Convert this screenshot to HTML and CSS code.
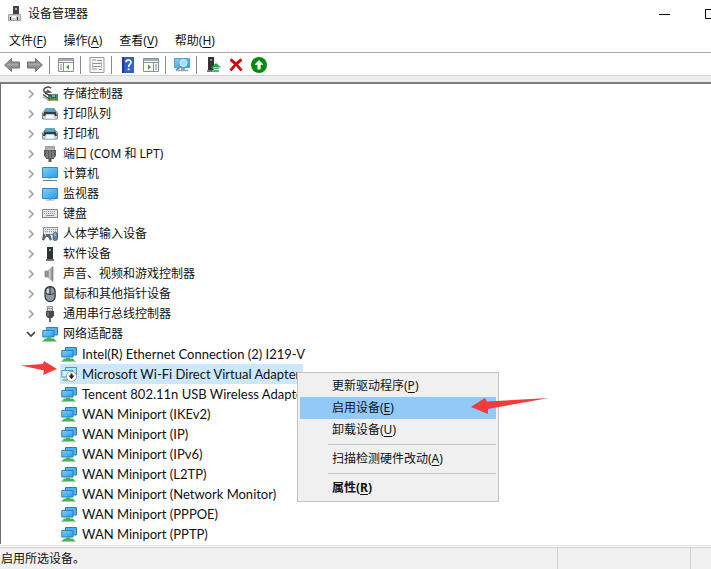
FILE: index.html
```html
<!DOCTYPE html>
<html lang="zh-CN">
<head>
<meta charset="utf-8">
<title>设备管理器</title>
<link rel="stylesheet" href="styles.css">
</head>
<body>
<svg class="sprites" aria-hidden="true">
  <defs>
    <linearGradient id="screen" x1="0" y1="0" x2="1" y2="1">
      <stop offset="0" stop-color="#7fd0fc"/><stop offset="1" stop-color="#2a9be8"/>
    </linearGradient>
    <linearGradient id="steel" x1="0" y1="0" x2="1" y2="0">
      <stop offset="0" stop-color="#777"/><stop offset=".5" stop-color="#ddd"/><stop offset="1" stop-color="#777"/>
    </linearGradient>
  </defs>
  <symbol id="i-chevron" viewBox="0 0 10 10"><path d="M3 1l4 4-4 4" fill="none" stroke="#a2a2a2" stroke-width="1.6"/></symbol>
  <symbol id="i-chevron-open" viewBox="0 0 10 10"><path d="M1 3l4 4 4-4" fill="none" stroke="#404040" stroke-width="1.7"/></symbol>
  <symbol id="i-app" viewBox="0 0 16 16">
    <path d="M6 0h6v9H6z" fill="#444"/><path d="M8 2h2v2H8z" fill="#aaa"/>
    <path d="M1.500 8.500h12v6h-12z" fill="#d0d0d0" stroke="#a0a0a0"/><path d="M3 11h1v3H3zM10 11h1v3h-1z" fill="#222"/><path d="M5 10h4v2H5z" fill="#fff"/>
  </symbol>
  <symbol id="i-back" viewBox="0 0 16 16"><path d="M.7 8L7.500 1.500v3.500h8v6h-8v3.500z" fill="#8f8f8f" stroke="#707070"/><path d="M3 7.500h11" stroke="#a9a9a9" stroke-width="2"/></symbol>
  <symbol id="i-forward" viewBox="0 0 16 16"><path d="M15.300 8L8.500 1.500v3.500h-8v6h8v3.500z" fill="#8f8f8f" stroke="#707070"/><path d="M2 7.500h11" stroke="#a9a9a9" stroke-width="2"/></symbol>
  <symbol id="i-tree-pane" viewBox="0 0 16 16">
    <path d="M.5 1.500h15v13H.5z" fill="#fbfbf8" stroke="#8b8f96"/><path d="M1 2h14v2H1z" fill="#a4adb7"/><path d="M1 5.500h14" stroke="#8b8f96"/>
    <path d="M5.500 6v8" stroke="#8b8f96"/><path d="M2 8h2M2 10h2M2 12h2" stroke="#7289a5"/><path d="M11 7.500v5L8 10z" fill="#3ea13c"/>
  </symbol>
  <symbol id="i-action-pane" viewBox="0 0 16 16">
    <path d="M.5 1.500h15v13H.5z" fill="#fbfbf8" stroke="#8b8f96"/><path d="M1 2h14v2H1z" fill="#a4adb7"/><path d="M1 5.500h14" stroke="#8b8f96"/>
    <path d="M10.500 6v8" stroke="#8b8f96"/><path d="M12 8h2M12 10h2M12 12h2" stroke="#7289a5"/><path d="M5 7.500v5L8 10z" fill="#3ea13c"/>
  </symbol>
  <symbol id="i-properties" viewBox="0 0 16 16">
    <path d="M1 .5h14v15H1z" fill="#f7f7f7" stroke="#9a9a9a"/>
    <path d="M3 3h4M8 3.500h5M4 6.500h8M4 9.500h8M3 12h5M10 12.500h3" stroke="#8f9499"/><path d="M3.500 5v6M12.500 5v6" stroke="#b9bdc2"/>
  </symbol>
  <symbol id="i-help" viewBox="0 0 16 16">
    <path d="M2 0h12v16H2z" fill="#3460c4"/><path d="M2 0h2v16H2z" fill="#1c3b8d"/>
    <path d="M6 5.300C6 2.300 11 2.300 11 5.200 11 7.200 8.600 7.300 8.600 10" fill="none" stroke="#fff" stroke-width="1.700"/><path d="M7.700 11.300h1.900v1.900H7.700z" fill="#fff"/>
  </symbol>
  <symbol id="i-scan" viewBox="0 0 16 16">
    <path d="M.5 1.500h15v9H.5z" fill="url(#screen)" stroke="#5b9cc4"/><path d="M7 11h4v2H7z" fill="#8aa"/><path d="M4 13.500h10" stroke="#8fa9ba" stroke-width="1.500"/>
    <path d="M7.500 8.500l-5.500 5" stroke="#6b93ad" stroke-width="2"/><circle cx="9.500" cy="6" r="3.500" fill="#a5defd" stroke="#d5f0ff"/>
  </symbol>
  <symbol id="i-enable" viewBox="0 0 16 16">
    <path d="M3 0h6v14H3z" fill="#343434"/><path d="M5 2h2v2H5z" fill="#5fae72"/><path d="M2 13h7v2H2z" fill="#777"/>
    <path d="M11 6l5 4.500H6z" fill="#2ca348"/><path d="M8 10.500h6v1.500H8zM8 13h6v2H8z" fill="#2ca348" stroke="#d9f3dd" stroke-width=".4"/>
  </symbol>
  <symbol id="i-remove" viewBox="0 0 16 16"><path d="M2.500 2.500Q9 7 13.500 13.500M13.500 2.500Q7 7 2.500 13.500" fill="none" stroke="#d5000c" stroke-width="2.800"/></symbol>
  <symbol id="i-update" viewBox="0 0 16 16"><circle cx="8" cy="8" r="8" fill="#078a0b"/><path d="M8 3l4.500 4.800H9.600V12.500H6.400V7.800H3.500z" fill="#fff"/></symbol>
  <symbol id="i-storage" viewBox="0 0 16 16">
    <path d="M6 8h10v7H6z" fill="#4c8e61"/><path d="M9 9h5v3H9z" fill="#286448"/><path d="M10 9h3v2h-3z" fill="#6bb6d8"/><path d="M8 14h7v1H8z" fill="#c9a53c"/>
    <path d="M9 2C5-.5 0 3 2.500 6H8L5 4M1 8.500l7 5M3 7l6 3" fill="none" stroke="#4b4b4b" stroke-width="1.500"/><path d="M1 10.500l6 4" stroke="#aaa" stroke-width="1.500"/>
  </symbol>
  <symbol id="i-printer" viewBox="0 0 16 16">
    <path d="M.5 7L3 4h10l2.500 3v6H.5z" fill="#d3d6d8" stroke="#777e83" stroke-width=".9"/>
    <path d="M3.500 2.500h9L13.500 6h-11z" fill="#55a9c6" stroke="#4b7f92" stroke-width=".6"/><path d="M2 6h12l1 4h-2l-1-2H4l-1 2H1z" fill="#373b3e"/><path d="M4.500 8.500h7l2 4.500h-11z" fill="#f5fafc" stroke="#70b5cf" stroke-width=".6"/>
  </symbol>
  <symbol id="i-port" viewBox="0 0 16 16">
    <path d="M3.500 .5h9V4h-9z" fill="#e3e3e3" stroke="#888" stroke-width=".8"/><path d="M5 1v2M7 1v2M9 1v2M11 1v2" stroke="#777"/>
    <path d="M2 4h12v6l-2 2v1H4v-1l-2-2z" fill="#5c5c5c"/><path d="M5 5v7M8 5v7M11 5v7" stroke="#999"/><path d="M6.500 13h3v3h-3z" fill="#555"/>
  </symbol>
  <symbol id="i-computer" viewBox="0 0 16 16"><path d="M.5 1.500h15v10H.5z" fill="url(#screen)" stroke="#3b87b8"/><path d="M6 12h4v1H6z" fill="#bdc"/><path d="M1 14.500h14" stroke="#64849b"/></symbol>
  <symbol id="i-monitor" viewBox="0 0 16 16"><path d="M.5 2.500h15v10H.5z" fill="url(#screen)" stroke="#3b87b8"/><path d="M4 14h8" stroke="#83a5bb"/><path d="M7 12.500h2V14H7z" fill="#83a5bb"/></symbol>
  <symbol id="i-keyboard" viewBox="0 0 16 16"><path d="M.5 3.500h15v8H.5z" fill="#e4e6e8" stroke="#81868b"/><path d="M2 5.500h12M2 7.500h12" stroke="#8a9096" stroke-dasharray="1 1"/><path d="M4 9.500h8" stroke="#8a9096"/></symbol>
  <symbol id="i-hid" viewBox="0 0 16 16">
    <path d="M1.500 1.500h14v7h-14z" fill="#e2e4e6" stroke="#8a9096"/><path d="M3 3.500h11M3 5.500h11" stroke="#8a9096" stroke-dasharray="1 1"/>
    <path d="M0 14l1-6h7l2 6-2 .500L6 11H4l-2 3.500z" fill="#59636c"/><path d="M3 8l1 2" stroke="#ddd"/><rect x="11" y="6.500" width="4.500" height="8" rx="2" fill="#5c86a8" stroke="#385066" stroke-width=".8"/><path d="M13 7v3" stroke="#cde"/>
  </symbol>
  <symbol id="i-software" viewBox="0 0 16 16"><path d="M5 1h6v12H5z" fill="#2e3431"/><path d="M7 3h2v2H7z" fill="#67b97d"/><path d="M4 13h8v2H4z" fill="#6d736f"/></symbol>
  <symbol id="i-sound" viewBox="0 0 16 16"><path d="M3 5h3l5-4.500v15L6 11H3z" fill="url(#steel)" stroke="#888" stroke-width=".7"/><path d="M6 5v6" stroke="#666"/></symbol>
  <symbol id="i-mouse" viewBox="0 0 16 16"><rect x="3.100" y=".6" width="10" height="15" rx="5" fill="#8e99a6" stroke="#2f3338" stroke-width="1.300"/><path d="M8 1v7M4 7c1 2 7 2 8 0" fill="none" stroke="#2f3338"/><path d="M6 3v4" stroke="#dbe4ee" stroke-width="1.500"/></symbol>
  <symbol id="i-usb" viewBox="0 0 16 16"><path d="M5.500 .5h5V5h-5z" fill="#e1e1e1" stroke="#888"/><path d="M7 2v1M9 2v1" stroke="#333"/><path d="M4 5h8v5l-2 2H6l-2-2z" fill="#484848"/><path d="M6 6v4" stroke="#999"/><path d="M7 12h2v4H7z" fill="#666"/></symbol>
  <symbol id="i-network" viewBox="0 0 16 16">
    <path d="M4.500 1.500h11v7.500h-11z" fill="#4bb2f3" stroke="#2b80b6"/><path d="M.8 4.500H12v6.500H.8z" fill="url(#screen)" stroke="#2b80b6"/>
    <path d="M5 11.500h4v1h3l2 2.500H1l2-2.500h2z" fill="#44b05b"/><path d="M0 15.500h15" stroke="#a6cfaf"/>
  </symbol>
  <symbol id="i-network-off" viewBox="0 0 16 16">
    <path d="M4.500 1.500h11v7.500h-11z" fill="#b3e1fb" stroke="#4a94c4"/><path d="M.8 4.500H12v6.500H.8z" fill="#d8f1fe" stroke="#4a94c4"/>
    <path d="M2 13h5v2H1z" fill="#7dc79b"/><circle cx="10.500" cy="10.500" r="5" fill="#fff" stroke="#888" stroke-width=".8"/>
    <path d="M9.500 7.500h2V9.500h2l-3 3.800-3-3.800h2z" fill="#222"/>
  </symbol>
</svg>

<div class="window">
  <header class="titlebar">
    <svg class="icon"><use href="#i-app"/></svg>
    <h1>设备管理器</h1>
    <div class="controls">
      <button aria-label="最小化"><svg viewBox="0 0 11 10"><path d="M0 5.500h11"/></svg></button>
      <button aria-label="最大化"><svg viewBox="0 0 11 10"><path d="M.5 .5h10v9H.5z"/></svg></button>
    </div>
  </header>

  <nav class="menubar">
    <button>文件(<u>F</u>)</button>
    <button>操作(<u>A</u>)</button>
    <button>查看(<u>V</u>)</button>
    <button>帮助(<u>H</u>)</button>
  </nav>

  <div class="toolbar" role="toolbar">
    <button aria-label="后退"><svg class="icon"><use href="#i-back"/></svg></button>
    <button aria-label="前进"><svg class="icon"><use href="#i-forward"/></svg></button>
    <span class="divider"></span>
    <button aria-label="显示控制台树"><svg class="icon"><use href="#i-tree-pane"/></svg></button>
    <span class="divider"></span>
    <button aria-label="属性"><svg class="icon"><use href="#i-properties"/></svg></button>
    <span class="divider"></span>
    <button aria-label="帮助"><svg class="icon"><use href="#i-help"/></svg></button>
    <button aria-label="显示操作窗格"><svg class="icon"><use href="#i-action-pane"/></svg></button>
    <span class="divider"></span>
    <button aria-label="扫描检测硬件改动"><svg class="icon"><use href="#i-scan"/></svg></button>
    <span class="divider"></span>
    <button aria-label="启用设备"><svg class="icon"><use href="#i-enable"/></svg></button>
    <button aria-label="卸载设备"><svg class="icon"><use href="#i-remove"/></svg></button>
    <button aria-label="更新驱动程序"><svg class="icon"><use href="#i-update"/></svg></button>
  </div>

  <main class="pane">
    <ul class="tree" role="tree">
      <li role="treeitem"><div class="row"><button aria-label="展开"><svg><use href="#i-chevron"/></svg></button><svg class="icon"><use href="#i-storage"/></svg><span>存储控制器</span></div></li>
      <li role="treeitem"><div class="row"><button aria-label="展开"><svg><use href="#i-chevron"/></svg></button><svg class="icon"><use href="#i-printer"/></svg><span>打印队列</span></div></li>
      <li role="treeitem"><div class="row"><button aria-label="展开"><svg><use href="#i-chevron"/></svg></button><svg class="icon"><use href="#i-printer"/></svg><span>打印机</span></div></li>
      <li role="treeitem"><div class="row"><button aria-label="展开"><svg><use href="#i-chevron"/></svg></button><svg class="icon"><use href="#i-port"/></svg><span class="latin">端口 (COM 和 LPT)</span></div></li>
      <li role="treeitem"><div class="row"><button aria-label="展开"><svg><use href="#i-chevron"/></svg></button><svg class="icon"><use href="#i-computer"/></svg><span>计算机</span></div></li>
      <li role="treeitem"><div class="row"><button aria-label="展开"><svg><use href="#i-chevron"/></svg></button><svg class="icon"><use href="#i-monitor"/></svg><span>监视器</span></div></li>
      <li role="treeitem"><div class="row"><button aria-label="展开"><svg><use href="#i-chevron"/></svg></button><svg class="icon"><use href="#i-keyboard"/></svg><span>键盘</span></div></li>
      <li role="treeitem"><div class="row"><button aria-label="展开"><svg><use href="#i-chevron"/></svg></button><svg class="icon"><use href="#i-hid"/></svg><span>人体学输入设备</span></div></li>
      <li role="treeitem"><div class="row"><button aria-label="展开"><svg><use href="#i-chevron"/></svg></button><svg class="icon"><use href="#i-software"/></svg><span>软件设备</span></div></li>
      <li role="treeitem"><div class="row"><button aria-label="展开"><svg><use href="#i-chevron"/></svg></button><svg class="icon"><use href="#i-sound"/></svg><span>声音、视频和游戏控制器</span></div></li>
      <li role="treeitem"><div class="row"><button aria-label="展开"><svg><use href="#i-chevron"/></svg></button><svg class="icon"><use href="#i-mouse"/></svg><span>鼠标和其他指针设备</span></div></li>
      <li role="treeitem"><div class="row"><button aria-label="展开"><svg><use href="#i-chevron"/></svg></button><svg class="icon"><use href="#i-usb"/></svg><span>通用串行总线控制器</span></div></li>
      <li role="treeitem" aria-expanded="true">
        <div class="row"><button aria-label="折叠"><svg><use href="#i-chevron-open"/></svg></button><svg class="icon"><use href="#i-network"/></svg><span>网络适配器</span></div>
        <ul class="children" role="group">
          <li role="treeitem"><div class="row"><svg class="icon"><use href="#i-network"/></svg><span>Intel(R) Ethernet Connection (2) I219-V</span></div></li>
          <li role="treeitem" aria-selected="true"><div class="row selected"><svg class="icon"><use href="#i-network-off"/></svg><span>Microsoft Wi-Fi Direct Virtual Adapter</span></div></li>
          <li role="treeitem"><div class="row"><svg class="icon"><use href="#i-network"/></svg><span>Tencent 802.11n USB Wireless Adapter</span></div></li>
          <li role="treeitem"><div class="row"><svg class="icon"><use href="#i-network"/></svg><span>WAN Miniport (IKEv2)</span></div></li>
          <li role="treeitem"><div class="row"><svg class="icon"><use href="#i-network"/></svg><span>WAN Miniport (IP)</span></div></li>
          <li role="treeitem"><div class="row"><svg class="icon"><use href="#i-network"/></svg><span>WAN Miniport (IPv6)</span></div></li>
          <li role="treeitem"><div class="row"><svg class="icon"><use href="#i-network"/></svg><span>WAN Miniport (L2TP)</span></div></li>
          <li role="treeitem"><div class="row"><svg class="icon"><use href="#i-network"/></svg><span>WAN Miniport (Network Monitor)</span></div></li>
          <li role="treeitem"><div class="row"><svg class="icon"><use href="#i-network"/></svg><span>WAN Miniport (PPPOE)</span></div></li>
          <li role="treeitem"><div class="row"><svg class="icon"><use href="#i-network"/></svg><span>WAN Miniport (PPTP)</span></div></li>
        </ul>
      </li>
    </ul>
  </main>

  <footer class="statusbar"><span>启用所选设备。</span><span></span><span></span></footer>

  <div class="context-menu" role="menu">
    <button role="menuitem">更新驱动程序(<u>P</u>)</button>
    <button role="menuitem" class="active">启用设备(<u>E</u>)</button>
    <button role="menuitem">卸载设备(<u>U</u>)</button>
    <hr>
    <button role="menuitem">扫描检测硬件改动(<u>A</u>)</button>
    <hr>
    <button role="menuitem" class="default">属性(<u>R</u>)</button>
  </div>

  <svg class="pointer pointer-device" viewBox="0 0 36 14" aria-hidden="true"><path d="M0 4.500L22 3l1-3 13 8-14 6 1-4.500z"/></svg>
  <svg class="pointer pointer-command" viewBox="0 0 78 18" aria-hidden="true"><path d="M0 10L14 1l2 3.500L78 1 25 10.500l-8 1.500v5z"/></svg>
</div>
</body>
</html>
```
FILE: styles.css
```css
* { box-sizing: border-box; }

body {
  margin: 0;
  background: #fff;
  color: #111;
  font: 12px/20px "Noto Sans", "Noto Sans CJK SC", sans-serif;
}

button {
  margin: 0;
  padding: 0;
  border: 0;
  background: none;
  color: inherit;
  font: inherit;
}

ul {
  margin: 0;
  padding: 0;
  list-style: none;
}

u { text-underline-offset: 2px; }

.sprites {
  position: absolute;
  width: 0;
  height: 0;
}

.icon {
  flex: none;
  width: 16px;
  height: 16px;
}

.window {
  position: relative;
  display: flex;
  flex-direction: column;
  min-height: 100vh;
  overflow: hidden;
}

.titlebar {
  display: flex;
  align-items: center;
  height: 28px;
  padding-left: 7px;
}

.titlebar h1 {
  margin: 0 0 0 5px;
  font-size: 12px;
  font-weight: 400;
}

.controls {
  display: flex;
  margin: 0 -22px 0 auto;
}

.controls button {
  display: grid;
  place-items: center;
  width: 46px;
  height: 26px;
}

.controls svg {
  width: 11px;
  height: 10px;
  fill: none;
  stroke: #000;
}

.menubar {
  display: flex;
  gap: 17px;
  height: 24px;
  padding: 3px 9px 1px;
}

.toolbar {
  display: flex;
  align-items: center;
  height: 24px;
  padding-top: 1px;
  border-top: 1px solid #a9a9a9;
  border-bottom: 1px solid #d2d2d2;
}

.toolbar button {
  display: grid;
  place-items: center;
  width: 23px;
  height: 20px;
}

.divider {
  width: 8px;
  height: 18px;
  padding-left: 3px;
}

.divider::before {
  content: "";
  display: block;
  width: 1px;
  height: 100%;
  background: #8c8c8c;
}

.pane {
  flex: 1;
  border-top: 6px solid #ececec;
}

.tree {
  height: 100%;
  border-top: 2px solid #7c7c7c;
  border-left: 1px solid #6e6e6e;
  padding-left: 25px;
}

.row {
  display: flex;
  align-items: center;
  width: max-content;
  height: 20px;
}

.row span {
  padding: 0 3px 0 5px;
  white-space: nowrap;
}

.row button {
  display: grid;
  place-items: center;
  width: 10px;
  height: 20px;
  margin-right: 6px;
}

.row button svg {
  width: 10px;
  height: 10px;
}

.children {
  padding-left: 34px;
  font-family: Lato, "Noto Sans", sans-serif;
  font-size: 13px;
  font-variant-ligatures: none;
}

.children .row { padding-left: 1px; }

.selected { background: #cce8ff; }

.statusbar {
  display: grid;
  grid-template-columns: 1fr 133px 21px;
  height: 24px;
  border-top: 1px solid #e2e2e2;
  background: #f0f0f0;
  box-shadow: inset 0 1px #fff, inset 0 2px #d0d0d0;
}

.statusbar span {
  padding: 3px 0 0 1px;
}

.statusbar span + span {
  margin-top: 2px;
  border-left: 1px solid #d0d0d0;
}

.context-menu {
  position: absolute;
  top: 372px;
  left: 297px;
  width: 202px;
  padding: 2px;
  border: 1px solid #c4c4c4;
  background: #f0f0f0;
}

.context-menu button {
  display: block;
  width: 100%;
  height: 22px;
  padding-left: 32px;
  text-align: left;
}

.context-menu .active { background: #91c9f7; }

.context-menu .default { font-weight: 700; }

.context-menu hr {
  height: 1px;
  margin: 3px 0 3px 28px;
  border: 0;
  background: #c6c6c6;
}

.pointer {
  position: absolute;
  fill: #f23c3c;
}

.pointer-device {
  top: 361px;
  left: 21px;
  width: 36px;
  height: 14px;
}

.pointer-command {
  top: 397px;
  left: 471px;
  width: 78px;
  height: 18px;
}
```
